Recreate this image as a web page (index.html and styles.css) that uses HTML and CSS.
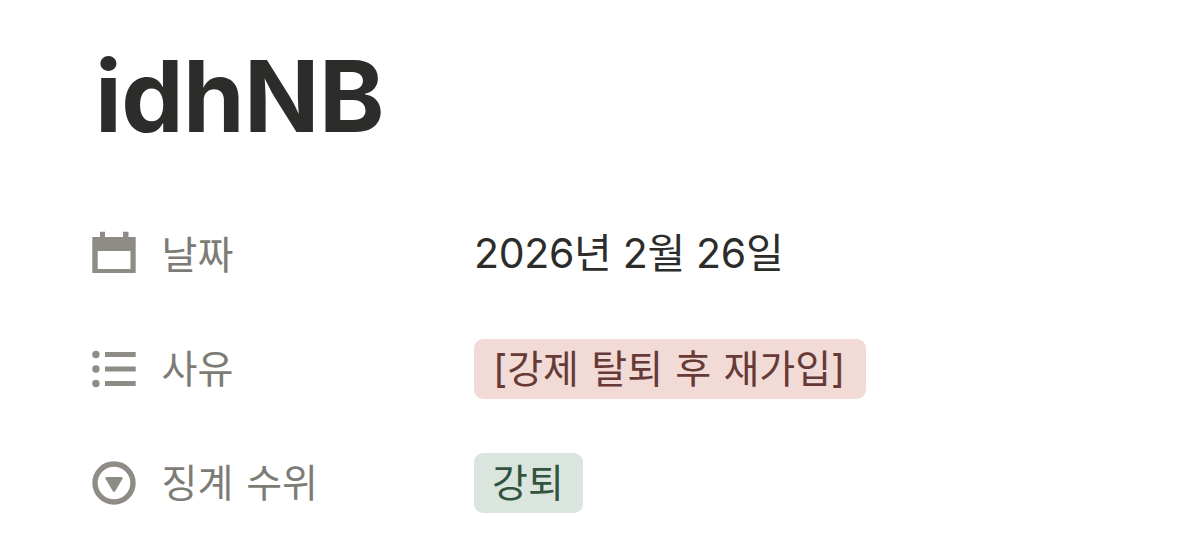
FILE: index.html
```html
<!DOCTYPE html>
<html lang="ko">
<head>
<meta charset="utf-8">
<title>idhNB</title>
<link rel="stylesheet" href="styles.css">
</head>
<body>
<main class="page">
  <h1 class="title">idhNB</h1>
  <dl class="properties">
    <div class="row">
      <dt class="label">
        <svg class="icon" viewBox="0 0 44 44"><path fill-rule="evenodd" d="M.3 4H8V-1.200H13V4H31V-1.200H36.500V4H43.700V40H.3ZM5.700 18V36H38.500V18Z"/></svg>
        <span class="name">날짜</span>
      </dt>
      <dd class="value date">2026년 2월 26일</dd>
    </div>
    <div class="row">
      <dt class="label">
        <svg class="icon" viewBox="0 0 44 44"><circle cx="3.9" cy="7.500" r="3.700"/><circle cx="3.9" cy="22" r="3.700"/><circle cx="3.9" cy="36.500" r="3.700"/><path d="M13 5H43.700V10H13ZM13 19.500H43.700V24.500H13ZM13 34H43.700V39H13Z"/></svg>
        <span class="name">사유</span>
      </dt>
      <dd class="value"><span class="tag red">[강제 탈퇴 후 재가입]</span></dd>
    </div>
    <div class="row">
      <dt class="label">
        <svg class="icon" viewBox="0 0 44 44"><circle class="ring" cx="22" cy="22" r="19"/><path d="M15 16H29Q31.500 16 30.200 18.300L23.300 30Q22 32 20.700 30L13.800 18.300Q12.500 16 15 16Z"/></svg>
        <span class="name">징계 수위</span>
      </dt>
      <dd class="value"><span class="tag green">강퇴</span></dd>
    </div>
  </dl>
</main>
</body>
</html>
```
FILE: styles.css
```css
* { box-sizing: border-box; }
body {
  margin: 0;
  background: #fff;
  color: #2c2c2b;
  font-family: Inter, "Noto Sans CJK KR", sans-serif;
}
.page { padding: 36px 92px 0; }
.title {
  margin: 0;
  padding-left: 3px;
  font-size: 99px;
  line-height: 120px;
  font-weight: 700;
  letter-spacing: -.6px;
}
.properties { margin: 42px 0 0; }
.row { display: flex; align-items: center; height: 114px; }
.label { display: flex; align-items: center; gap: 25.500px; width: 382px; color: #7d7b75; }
.icon { width: 44px; height: 44px; fill: #8e8c85; flex: none; overflow: visible; }
.ring { fill: none; stroke: #8e8c85; stroke-width: 5.400; }
.name { font-size: 39px; line-height: 60px; word-spacing: 2px; white-space: nowrap; }
.value { margin: 0; font-size: 39px; line-height: 60px; white-space: nowrap; }
.date { padding-bottom: 5px; font-size: 41px; letter-spacing: -.3px; }
.tag { display: block; height: 60px; padding: 0 18px; border-radius: 9px; }
.red { width: 392px; padding-left: 19px; background: #f2dbd6; color: #663a36; word-spacing: 1.300px; }
.green { width: 109px; background: #dae6dd; color: #32543f; }
```
